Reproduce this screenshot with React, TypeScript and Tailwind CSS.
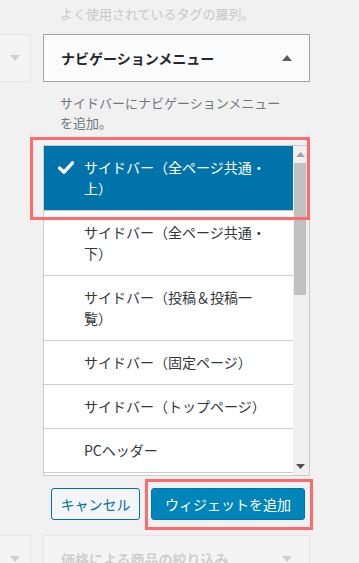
import React from "react";

const items: { lines: string[]; selected?: boolean }[] = [
  { lines: ["サイドバー（全ページ共通・", "上）"], selected: true },
  { lines: ["サイドバー（全ページ共通・", "下）"] },
  { lines: ["サイドバー（投稿＆投稿一", "覧）"] },
  { lines: ["サイドバー（固定ページ）"] },
  { lines: ["サイドバー（トップページ）"] },
  { lines: ["PCヘッダー"] },
  { lines: ["PCフッター"] },
];

function CheckMark() {
  return (
    <svg width="16" height="13" viewBox="0 0 16 13" className="shrink-0">
      <path d="M1.5 7 L6 11.2 L14.5 1.8" fill="none" stroke="#fff" strokeWidth="3.4" strokeLinecap="round" strokeLinejoin="round" />
    </svg>
  );
}

function Tri({ up, color }: { up?: boolean; color: string }) {
  return (
    <svg width="10" height="6" viewBox="0 0 10 6">
      <path d={up ? "M0 6 L5 0 L10 6 Z" : "M0 0 L10 0 L5 6 Z"} fill={color} />
    </svg>
  );
}

export default function App() {
  return (
    <div
      className="relative w-[359px] h-[563px] overflow-hidden bg-[#f1f1f1]"
      style={{ fontFamily: '"Noto Sans CJK JP", "Noto Sans", sans-serif' }}
    >
      {/* 前のウィジェットの説明（薄く表示） */}
      <div className="h-[34px] pl-[60px] pt-[4px] text-[13px] leading-[20px] text-[#c8c8c8]">
        よく使用されているタグの羅列。
      </div>

      <div className="flex items-start gap-[12px]">
        <div className="w-[31px] h-[48px] bg-[#f4f4f4] border border-l-0 border-[#e6e6e6] flex items-center justify-center">
          <Tri color="#d0d0d0" />
        </div>
        <div className="w-[267px] h-[48px] bg-[#fbfbfb] border border-[#a0a5aa] flex items-center justify-between pl-[17px] pr-[17px]">
          <span className="text-[14px] font-semibold text-[#23282d]">ナビゲーションメニュー</span>
          <Tri up color="#555d66" />
        </div>
      </div>

      <div className="pl-[43px]">
        <p className="w-[267px] pl-[17px] pt-[11px] text-[13px] leading-[20px] text-[#72777c]">
          サイドバーにナビゲーションメニュー
          <br />
          を追加。
        </p>

        {/* 追加先のサイドバー一覧 */}
        <div className="mt-[12px] w-[267px] h-[331px] bg-white border border-[#cccccc] flex overflow-hidden">
          <ul className="flex-1 min-w-0">
            {items.map((it, i) => (
              <li
                key={i}
                className={
                  "flex items-start gap-[10px] pl-[14px] py-[11px] border-b border-[#cccccc] text-[14px] leading-[21px] " +
                  (it.selected ? "bg-[#0073aa] text-white" : "text-[#32373c]")
                }
              >
                <span className="w-[16px] h-[21px] flex items-center">{it.selected && <CheckMark />}</span>
                <span className="whitespace-nowrap">
                  {it.lines.map((l, j) => (
                    <span key={j} className="block">
                      {l}
                    </span>
                  ))}
                </span>
              </li>
            ))}
          </ul>
          <div className="w-[16px] shrink-0 bg-[#f0f0f0] flex flex-col items-center pr-[3px] border-l border-[#f0f0f0]">
            <div className="h-[17px] flex items-center justify-center">
              <svg width="9" height="5" viewBox="0 0 9 5">
                <path d="M0 5 L4.5 0 L9 5 Z" fill="#a3a3a3" />
              </svg>
            </div>
            <div className="w-[12px] h-[132px] bg-[#c1c1c1]" />
            <div className="flex-1" />
            <div className="h-[17px] flex items-center justify-center">
              <svg width="9" height="5" viewBox="0 0 9 5">
                <path d="M0 0 L9 0 L4.5 5 Z" fill="#505050" />
              </svg>
            </div>
          </div>
        </div>

        <div className="mt-[12px] pl-[8px] flex gap-[11px]">
          <button className="w-[89px] h-[32px] rounded-[3px] border border-[#0071a1] bg-[#f3f5f6] text-[#0071a1] text-[14px] whitespace-nowrap">
            キャンセル
          </button>
          <button className="w-[154px] h-[32px] rounded-[3px] border border-[#0073aa] bg-[#0085ba] text-white text-[14px] whitespace-nowrap">
            ウィジェットを追加
          </button>
        </div>
      </div>

      <div className="mt-[15px] flex items-start gap-[12px]">
        <div className="w-[31px] h-[48px] bg-[#f4f4f4] border border-l-0 border-[#e6e6e6] flex items-center justify-center">
          <Tri color="#d0d0d0" />
        </div>
        <div className="w-[267px] h-[48px] bg-[#f4f4f4] border border-[#e6e6e6] flex items-center justify-between pl-[17px] pr-[17px]">
          <span className="text-[14px] font-semibold text-[#cfcfcf]">価格による商品の絞り込み</span>
          <Tri color="#d0d0d0" />
        </div>
      </div>

      {/* 注釈の赤枠 */}
      <div className="absolute left-[30px] top-[137px] w-[280px] h-[83px] border-[3px] border-[#ff6b6b]" />
      <div className="absolute left-[145px] top-[479px] w-[168px] h-[51px] border-[3px] border-[#ff6b6b]" />
    </div>
  );
}
